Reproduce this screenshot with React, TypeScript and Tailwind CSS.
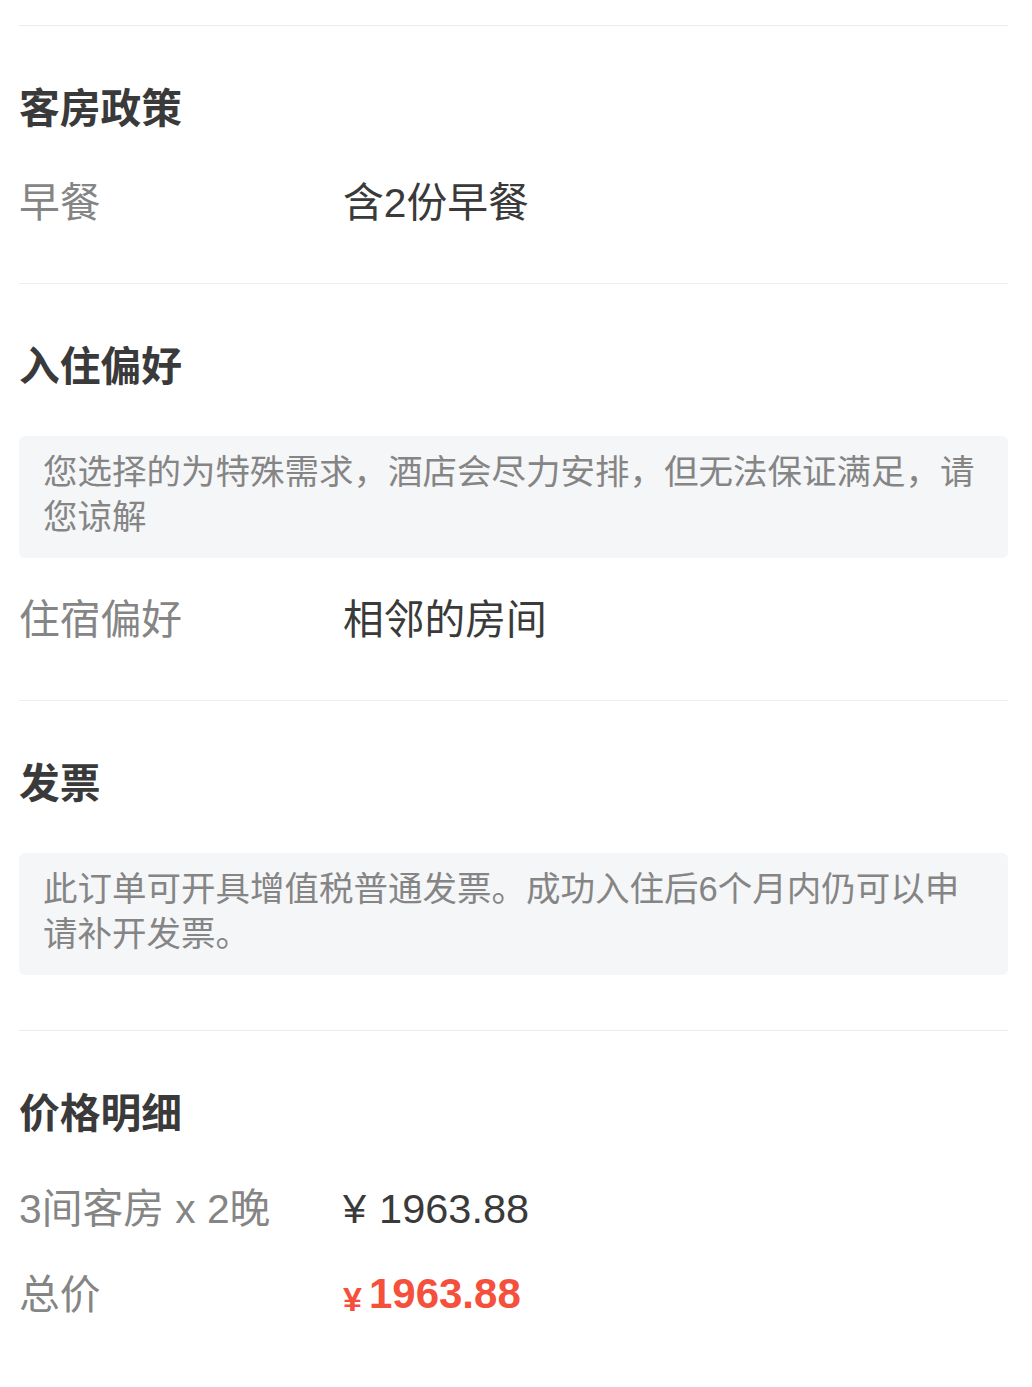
import React from "react";

const FONT = {
  fontFamily: '"Liberation Sans", "Noto Sans CJK SC", sans-serif',
};

const Title = ({ text }: { text: string }) => (
  <div className="mt-[55px] h-[56px] text-[40.75px] leading-[56px] font-bold text-[#3a3a3a]">
    {text}
  </div>
);

const Row = ({
  label,
  value,
  className = "",
}: {
  label: string;
  value: React.ReactNode;
  className?: string;
}) => (
  <div className={`flex h-[56px] items-center text-[40.75px] leading-[56px] ${className}`}>
    <div className="w-[324px] shrink-0 text-[#858585]">{label}</div>
    <div className="text-[#3a3a3a]">{value}</div>
  </div>
);

const Notice = ({ text }: { text: string }) => (
  <div className="mt-[41px] rounded-[6px] bg-[#f5f6f8] pt-[14px] pb-[18px] pl-[24px] pr-[25px] text-[34.5px] leading-[45px] text-[#858585]">
    {text}
  </div>
);

export default function App() {
  return (
    <div className="min-h-screen bg-white pl-[19px] pr-[24px] pt-[25px]" style={FONT}>
      {/* 客房政策 */}
      <section className="border-t border-[#ededed] pb-[52px]">
        <Title text="客房政策" />
        <Row label="早餐" value="含2份早餐" className="mt-[38px]" />
      </section>

      {/* 入住偏好 */}
      <section className="border-t border-[#ededed] pb-[52px]">
        <Title text="入住偏好" />
        <Notice text="您选择的为特殊需求，酒店会尽力安排，但无法保证满足，请您谅解" />
        <Row label="住宿偏好" value="相邻的房间" className="mt-[34px]" />
      </section>

      {/* 发票 */}
      <section className="border-t border-[#ededed] pb-[55px]">
        <Title text="发票" />
        <Notice text="此订单可开具增值税普通发票。成功入住后6个月内仍可以申请补开发票。" />
      </section>

      {/* 价格明细 */}
      <section className="border-t border-[#ededed] pb-[60px]">
        <Title text="价格明细" />
        <Row
          label="3间客房 x 2晚"
          value={
            <span className="text-[41.5px]">
              ¥<span className="ml-[13px]">1963.88</span>
            </span>
          }
          className="mt-[39px]"
        />
        <Row
          label="总价"
          value={
            <span className="font-bold text-[#f5503c]">
              <span className="relative top-[3px] text-[34px]">¥</span>
              <span className="ml-[7px] text-[42px]">1963.88</span>
            </span>
          }
          className="mt-[30px]"
        />
      </section>
    </div>
  );
}
